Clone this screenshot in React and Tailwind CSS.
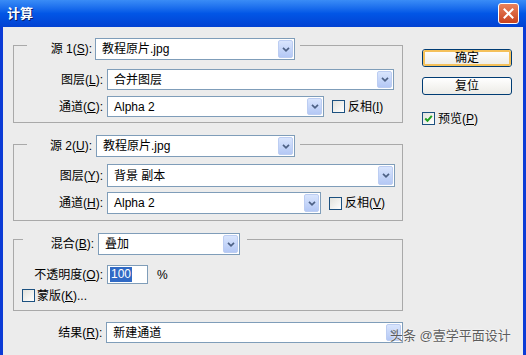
import React from "react";

function Arrow() {
  return (
    <div className="w-[15px] my-px mr-px rounded-[2px] bg-linear-to-b from-[#d9e5fd] to-[#b4c8f5] border border-[#bccdf2] flex items-center justify-center shrink-0">
      <svg width="8" height="5" viewBox="0 0 8 5">
        <path d="M1 0.8 L4 3.8 L7 0.8" fill="none" stroke="#4d6185" strokeWidth="1.7" />
      </svg>
    </div>
  );
}

function Select({ className, children }) {
  return (
    <div className={`${className} flex items-stretch bg-white border border-[#7f9db9]`}>
      <div className="flex-1 flex items-center pl-[6px] leading-none whitespace-nowrap overflow-hidden text-black">
        {children}
      </div>
      <Arrow />
    </div>
  );
}

function Check({ checked }) {
  return (
    <div className="w-[13px] h-[13px] border border-[#1c5180] bg-linear-to-br from-[#e2e2dc] to-white flex items-center justify-center shrink-0">
      {checked && (
        <svg width="9" height="9" viewBox="0 0 9 9">
          <path d="M1.2 4.5 L3.5 6.8 L7.8 1.8" fill="none" stroke="#21a121" strokeWidth="2" />
        </svg>
      )}
    </div>
  );
}

function Button({ children, def }) {
  return (
    <div className="h-[18px] w-[90px] rounded-[3px] border border-[#003c74] bg-linear-to-b from-white to-[#ecebe6] flex">
      <div
        className={`flex-1 rounded-[2px] flex items-center justify-center leading-none text-black ${
          def ? "border-2 border-[#f5c15a]" : ""
        }`}
      >
        {children}
      </div>
    </div>
  );
}

export default function App() {
  return (
    <div className="relative w-[526px] h-[355px] overflow-hidden bg-[#0b3bd6] flex flex-col font-['Liberation_Sans','Noto_Sans_CJK_SC',sans-serif] text-[12px] text-black">
      {/* title bar */}
      <div className="h-[27px] shrink-0 bg-linear-to-b from-[#3a8cf6] via-[#0256e6] to-[#0342d2] flex items-center pl-[7px] pr-[7px]">
        <div className="text-white font-bold text-[13px] leading-none [text-shadow:1px_1px_0_#0a1f6b]">计算</div>
        <div className="ml-auto w-[21px] h-[21px] rounded-[3px] border border-white bg-linear-to-b from-[#e9825c] to-[#c8411c] flex items-center justify-center">
          <svg width="11" height="11" viewBox="0 0 11 11">
            <path d="M1.5 1.5 L9.5 9.5 M9.5 1.5 L1.5 9.5" stroke="white" strokeWidth="2" strokeLinecap="square" />
          </svg>
        </div>
      </div>

      {/* body */}
      <div className="flex-1 mx-[3px] bg-[#ececec] flex pl-[10px]">
        <div className="w-[390px] flex flex-col">
          {/* group 1 */}
          <div className="mt-[18px] border border-[#a9a9a9] flex flex-col pb-[5px]">
            <div className="-mt-[8px] ml-[13px] self-start flex items-center bg-[#ececec] pr-[5px]">
              <div className="w-[65px] text-right leading-none">
                源 1(<u>S</u>):
              </div>
              <Select className="ml-[3px] w-[200px] h-[22px]">教程原片.jpg</Select>
            </div>
            <div className="mt-[9px] flex items-center">
              <div className="w-[89px] text-right leading-none">
                图层(<u>L</u>):
              </div>
              <Select className="ml-[4px] w-[287px] h-[21px]">合并图层</Select>
            </div>
            <div className="mt-[6px] flex items-center">
              <div className="w-[89px] text-right leading-none">
                通道(<u>C</u>):
              </div>
              <Select className="ml-[4px] w-[217px] h-[21px]">Alpha 2</Select>
              <div className="ml-[8px]">
                <Check />
              </div>
              <div className="ml-[3px] leading-none">
                反相(<u>I</u>)
              </div>
            </div>
          </div>

          {/* group 2 */}
          <div className="mt-[21px] border border-[#a9a9a9] flex flex-col pb-[6px]">
            <div className="-mt-[10px] ml-[13px] self-start flex items-center bg-[#ececec] pr-[5px]">
              <div className="w-[65px] text-right leading-none">
                源 2(<u>U</u>):
              </div>
              <Select className="ml-[4px] w-[199px] h-[22px]">教程原片.jpg</Select>
            </div>
            <div className="mt-[7px] flex items-center">
              <div className="w-[89px] text-right leading-none">
                图层(<u>Y</u>):
              </div>
              <Select className="ml-[4px] w-[288px] h-[23px]">背景 副本</Select>
            </div>
            <div className="mt-[5px] flex items-center">
              <div className="w-[89px] text-right leading-none">
                通道(<u>H</u>):
              </div>
              <Select className="ml-[4px] w-[214px] h-[22px]">Alpha 2</Select>
              <div className="ml-[8px]">
                <Check />
              </div>
              <div className="ml-[3px] leading-none">
                反相(<u>V</u>)
              </div>
            </div>
          </div>

          {/* group 3 */}
          <div className="mt-[18px] border border-[#a9a9a9] flex flex-col pb-[8px]">
            <div className="-mt-[7px] ml-[9px] self-start flex items-center bg-[#ececec] pr-[7px]">
              <div className="w-[71px] text-right leading-none">
                混合(<u>B</u>):
              </div>
              <Select className="ml-[4px] w-[142px] h-[22px]">叠加</Select>
            </div>
            <div className="mt-[10px] flex items-center">
              <div className="w-[89px] text-right leading-none">
                不透明度(<u>O</u>):
              </div>
              <div className="ml-[4px] w-[41px] h-[19px] bg-white border border-[#7f9db9] flex items-center pl-[2px]">
                <span className="bg-[#316ac5] text-white leading-[15px] px-px">100</span>
              </div>
              <div className="ml-[9px] leading-none">%</div>
            </div>
            <div className="mt-[5px] flex items-center ml-[8px]">
              <Check />
              <div className="ml-[2px] leading-none">
                蒙版(<u>K</u>)...
              </div>
            </div>
          </div>

          {/* result */}
          <div className="mt-[11px] flex items-center">
            <div className="w-[90px] text-right leading-none">
              结果(<u>R</u>):
            </div>
            <Select className="ml-[4px] w-[299px] h-[21px]">新建通道</Select>
          </div>
        </div>

        {/* right column */}
        <div className="ml-[19px] w-[90px] flex flex-col">
          <div className="mt-[22px]">
            <Button def>确定</Button>
          </div>
          <div className="mt-[10px]">
            <Button>复位</Button>
          </div>
          <div className="mt-[17px] flex items-center">
            <Check checked />
            <div className="ml-[3px] leading-none">
              预览(<u>P</u>)
            </div>
          </div>
        </div>
      </div>

      {/* watermark overlay */}
      <div className="absolute left-[390px] top-[329px] text-[13px] leading-none text-[#5c5c5c] [text-shadow:0_0_2px_#fff,0_0_1px_#fff] whitespace-nowrap">
        头条 @壹学平面设计
      </div>
    </div>
  );
}
